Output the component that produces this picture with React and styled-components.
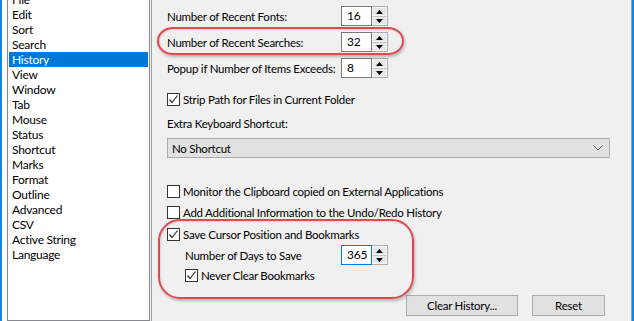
import React from "react"
import styled, { createGlobalStyle } from "styled-components"

const GlobalStyle = createGlobalStyle`
  html, body {
    margin: 0;
    padding: 0;
    overflow: hidden;
    background: #f0f0f0;
  }
  body {
    font-family: Lato, "Noto Sans", sans-serif;
    font-size: 11.5px;
    letter-spacing: -0.25px;
    line-height: 15px;
    color: #000;
  }
`

const Frame = styled.div`
  display: flex;
  width: 634px;
  height: 321px;
  box-sizing: border-box;
  border-left: 2px solid #1883d7;
  border-right: 2px solid #1883d7;
  background: #f0f0f0;
  overflow: hidden;
`

const Gutter = styled.div`
  width: 5px;
  flex: 0 0 5px;
  background: #ffffff;
`

const CategoryList = styled.ul`
  flex: 0 0 143px;
  box-sizing: border-box;
  margin: -10px 0 0;
  padding: 1px;
  list-style: none;
  background: #ffffff;
  border: 1px solid #828790;
`

const CategoryItem = styled.li`
  height: 15px;
  line-height: 15px;
  padding-left: 3px;
  font-size: 12px;
  white-space: nowrap;
  overflow: hidden;
  background: ${p => (p.$active ? "#0078d7" : "transparent")};
  color: ${p => (p.$active ? "#ffffff" : "#000000")};
`

const Panel = styled.div`
  position: relative;
  flex: 1;
  margin-left: 1px;
  box-sizing: border-box;
  border-left: 1px solid #a0a0a0;
  border-right: 1px solid #a0a0a0;
  padding: 6px 21px 0 15px;
  display: flex;
  flex-direction: column;
`

const SpinRow = styled.div`
  display: flex;
  align-items: center;
  height: 20px;
  margin-top: ${p => p.$top || 0}px;
  padding-left: ${p => p.$indent || 0}px;
`

const SpinLabel = styled.span`
  width: ${p => p.$width}px;
  white-space: nowrap;
`

const Spin = styled.div`
  display: flex;
  height: 20px;
`

const SpinValue = styled.div`
  width: 31px;
  box-sizing: border-box;
  border: 1px solid ${p => (p.$focused ? "#0078d7" : "#7a7a7a")};
  background: #ffffff;
  padding-left: 5px;
  font-size: 12px;
  line-height: 18px;
`

const SpinButtons = styled.div`
  display: flex;
  flex-direction: column;
  width: 16px;
  box-sizing: border-box;
  border: 1px solid #adadad;
  border-left: none;
`

const SpinButton = styled.div`
  flex: 1;
  display: flex;
  align-items: center;
  justify-content: center;
  background: #e8e8e8;
  border: 1px solid #f6f6f6;
  & + & {
    border-top: 1px solid #c4c4c4;
  }
`

const CheckRow = styled.label`
  display: flex;
  align-items: center;
  height: 16px;
  gap: 3px;
  margin-top: ${p => p.$top || 0}px;
  padding-left: ${p => p.$indent || 0}px;
  white-space: nowrap;
`

const Box = styled.span`
  width: 13px;
  height: 13px;
  flex: 0 0 13px;
  box-sizing: border-box;
  border: 1px solid #333333;
  background: #ffffff;
  display: flex;
  align-items: center;
  justify-content: center;
`

const FieldLabel = styled.div`
  margin-top: ${p => p.$top || 0}px;
  height: 16px;
  line-height: 16px;
`

const Select = styled.div`
  margin-top: 6px;
  height: 20px;
  box-sizing: border-box;
  border: 1px solid #adadad;
  background: #e1e1e1;
  display: flex;
  align-items: center;
  justify-content: space-between;
  padding: 0 6px 0 4px;
`

const ButtonRow = styled.div`
  display: flex;
  justify-content: flex-end;
  gap: 14px;
  margin-top: 12px;
  padding-right: 5px;
`

const PushButton = styled.div`
  width: ${p => p.$width}px;
  height: 21px;
  box-sizing: border-box;
  border: 1px solid #adadad;
  background: #e1e1e1;
  display: flex;
  align-items: center;
  justify-content: center;
`

const Callout = styled.div`
  position: absolute;
  left: ${p => p.$left}px;
  top: ${p => p.$top}px;
  width: ${p => p.$width}px;
  height: ${p => p.$height}px;
  box-sizing: border-box;
  border: 2.5px solid #e04a4f;
  border-radius: ${p => p.$radius};
  box-shadow: 1px 2px 3px rgba(0, 0, 0, 0.25), inset 1px 1px 2px rgba(0, 0, 0, 0.12);
  pointer-events: none;
`

const Arrow = ({ up }) => (
  <svg width="7" height="4" viewBox="0 0 7 4">
    <polygon points={up ? "3.5,0 7,4 0,4" : "0,0 7,0 3.5,4"} fill="#000" />
  </svg>
)

const Check = () => (
  <svg width="11" height="11" viewBox="0 0 11 11">
    <polyline points="1.5,5.5 4,8.5 9.5,1.5" fill="none" stroke="#333" strokeWidth="1.2" />
  </svg>
)

const Chevron = () => (
  <svg width="10" height="6" viewBox="0 0 10 6">
    <polyline points="0.5,0.5 5,5 9.5,0.5" fill="none" stroke="#555" strokeWidth="1" />
  </svg>
)

const SpinBox = ({ value, focused }) => (
  <Spin>
    <SpinValue $focused={focused}>{value}</SpinValue>
    <SpinButtons>
      <SpinButton><Arrow up /></SpinButton>
      <SpinButton><Arrow /></SpinButton>
    </SpinButtons>
  </Spin>
)

const CheckBox = ({ checked, children, top, indent }) => (
  <CheckRow $top={top} $indent={indent}>
    <Box>{checked && <Check />}</Box>
    {children}
  </CheckRow>
)

const categories = [
  "File", "Edit", "Sort", "Search", "History", "View", "Window", "Tab", "Mouse",
  "Status", "Shortcut", "Marks", "Format", "Outline", "Advanced", "CSV",
  "Active String", "Language",
]

const App = () => (
  <>
    <GlobalStyle />
    <Frame>
      <Gutter />
      <CategoryList>
        {categories.map(c => (
          <CategoryItem key={c} $active={c === "History"}>{c}</CategoryItem>
        ))}
      </CategoryList>
      <Panel>
        <SpinRow>
          <SpinLabel $width={174}>Number of Recent Fonts:</SpinLabel>
          <SpinBox value="16" />
        </SpinRow>
        <SpinRow $top={6}>
          <SpinLabel $width={174}>Number of Recent Searches:</SpinLabel>
          <SpinBox value="32" />
        </SpinRow>
        <SpinRow $top={6}>
          <SpinLabel $width={174}>Popup if Number of Items Exceeds:</SpinLabel>
          <SpinBox value="8" />
        </SpinRow>
        <CheckBox checked top={13}>Strip Path for Files in Current Folder</CheckBox>
        <FieldLabel $top={9}>Extra Keyboard Shortcut:</FieldLabel>
        <Select>
          <span>No Shortcut</span>
          <Chevron />
        </Select>
        <CheckBox top={25}>Monitor the Clipboard copied on External Applications</CheckBox>
        <CheckBox top={5}>Add Additional Information to the Undo/Redo History</CheckBox>
        <CheckBox checked top={6}>Save Cursor Position and Bookmarks</CheckBox>
        <SpinRow $top={3} $indent={18}>
          <SpinLabel $width={156}>Number of Days to Save</SpinLabel>
          <SpinBox value="365" focused />
        </SpinRow>
        <CheckBox checked top={2} indent={18}>Never Clear Bookmarks</CheckBox>
        <ButtonRow>
          <PushButton $width={112}>Clear History...</PushButton>
          <PushButton $width={73}>Reset</PushButton>
        </ButtonRow>
        <Callout $left={5} $top={27} $width={247} $height={28} $radius="16px / 14px" />
        <Callout $left={6} $top={219} $width={256} $height={80} $radius="22px" />
      </Panel>
    </Frame>
  </>
)

export default App
